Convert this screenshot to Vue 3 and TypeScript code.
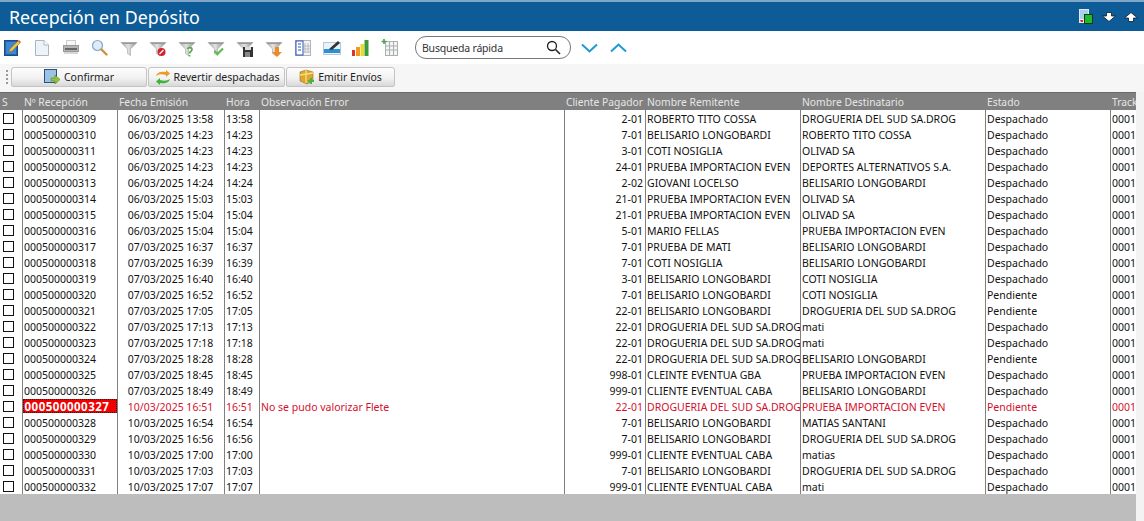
<script setup lang="ts">
type Row = { id: string; fecha: string; hora: string; obs?: string; cli: string; rem: string; dest: string; estado: string; err?: boolean }
const raw: string[] = [
  '309|06/03/2025 13:58|13:58|2-01|ROBERTO TITO COSSA|DROGUERIA DEL SUD SA.DROG|Despachado',
  '310|06/03/2025 14:23|14:23|7-01|BELISARIO LONGOBARDI|ROBERTO TITO COSSA|Despachado',
  '311|06/03/2025 14:23|14:23|3-01|COTI NOSIGLIA|OLIVAD SA|Despachado',
  '312|06/03/2025 14:23|14:23|24-01|PRUEBA IMPORTACION EVEN|DEPORTES ALTERNATIVOS S.A.|Despachado',
  '313|06/03/2025 14:24|14:24|2-02|GIOVANI LOCELSO|BELISARIO LONGOBARDI|Despachado',
  '314|06/03/2025 15:03|15:03|21-01|PRUEBA IMPORTACION EVEN|OLIVAD SA|Despachado',
  '315|06/03/2025 15:04|15:04|21-01|PRUEBA IMPORTACION EVEN|OLIVAD SA|Despachado',
  '316|06/03/2025 15:04|15:04|5-01|MARIO FELLAS|PRUEBA IMPORTACION EVEN|Despachado',
  '317|07/03/2025 16:37|16:37|7-01|PRUEBA DE MATI|BELISARIO LONGOBARDI|Despachado',
  '318|07/03/2025 16:39|16:39|7-01|COTI NOSIGLIA|BELISARIO LONGOBARDI|Despachado',
  '319|07/03/2025 16:40|16:40|3-01|BELISARIO LONGOBARDI|COTI NOSIGLIA|Despachado',
  '320|07/03/2025 16:52|16:52|7-01|BELISARIO LONGOBARDI|COTI NOSIGLIA|Pendiente',
  '321|07/03/2025 17:05|17:05|22-01|BELISARIO LONGOBARDI|DROGUERIA DEL SUD SA.DROG|Pendiente',
  '322|07/03/2025 17:13|17:13|22-01|DROGUERIA DEL SUD SA.DROG|mati|Despachado',
  '323|07/03/2025 17:18|17:18|22-01|DROGUERIA DEL SUD SA.DROG|mati|Despachado',
  '324|07/03/2025 18:28|18:28|22-01|DROGUERIA DEL SUD SA.DROG|BELISARIO LONGOBARDI|Pendiente',
  '325|07/03/2025 18:45|18:45|998-01|CLEINTE EVENTUA GBA|PRUEBA IMPORTACION EVEN|Despachado',
  '326|07/03/2025 18:49|18:49|999-01|CLIENTE EVENTUAL CABA|BELISARIO LONGOBARDI|Despachado',
  '327|10/03/2025 16:51|16:51|22-01|DROGUERIA DEL SUD SA.DROG|PRUEBA IMPORTACION EVEN|Pendiente',
  '328|10/03/2025 16:54|16:54|7-01|BELISARIO LONGOBARDI|MATIAS SANTANI|Despachado',
  '329|10/03/2025 16:56|16:56|7-01|BELISARIO LONGOBARDI|DROGUERIA DEL SUD SA.DROG|Despachado',
  '330|10/03/2025 17:00|17:00|999-01|CLIENTE EVENTUAL CABA|matias|Despachado',
  '331|10/03/2025 17:03|17:03|7-01|BELISARIO LONGOBARDI|DROGUERIA DEL SUD SA.DROG|Despachado',
  '332|10/03/2025 17:07|17:07|999-01|CLIENTE EVENTUAL CABA|mati|Despachado',
]
const rows: Row[] = raw.map((s) => {
  const [n, fecha, hora, cli, rem, dest, estado] = s.split('|')
  const err = n === '327'
  return { id: '000500000' + n, fecha, hora, cli, rem, dest, estado, err, obs: err ? 'No se pudo valorizar Flete' : '' }
})
</script>

<template>
  <div class="page">
    <svg width="0" height="0" class="defs">
      <defs>
        <linearGradient id="fg" x1="0" y1="0" x2="1" y2="0">
          <stop offset="0" stop-color="#a8a8a8" />
          <stop offset="0.450" stop-color="#e2e2e2" />
          <stop offset="1" stop-color="#8c8c8c" />
        </linearGradient>
        <symbol id="funnel" viewBox="0 0 18 18">
          <path d="M1 3.500h16l-6.500 6.500v6.500l-3-2V10z" fill="url(#fg)" stroke="#a2a2a2" stroke-width=".6" />
          <path d="M1.500 3.500h15l-1.500 1.500H3z" fill="#999" />
        </symbol>
      </defs>
    </svg>

    <header class="title">
      <span class="title-text">Recepción en Depósito</span>
      <div class="win">
        <svg width="15" height="16" viewBox="0 0 15 16">
          <rect x="0.500" y="0.500" width="9" height="10" fill="#a9d0ee" stroke="#dfeaf3" />
          <rect x="0" y="10" width="5" height="4" fill="#e8e8e8" />
          <path d="M1 11h3v2H2z" fill="#d62a2a" />
          <rect x="5.500" y="5.500" width="8" height="9" fill="#22b82b" stroke="#0d3d12" />
        </svg>
        <svg width="14" height="10" viewBox="0 0 14 10"><path d="M4.500.5h5v3.500h4L7 9.500.5 4h4z" fill="#fff" stroke="#0a1a28" stroke-width=".8" /></svg>
        <svg width="14" height="10" viewBox="0 0 14 10"><path d="M4.500 9.500h5V6h4L7 .5.500 6h4z" fill="#fff" stroke="#0a1a28" stroke-width=".8" /></svg>
      </div>
    </header>

    <div class="tools">
      <div class="ic">
        <svg width="17" height="17" viewBox="0 0 17 17"><rect x="0.500" y="1.500" width="13" height="15" fill="#2463ad" stroke="#1c4a88" /><rect x="2" y="3" width="10" height="12" fill="#3d86d2" /><path d="M5 13l1-3 8-8 2 2-8 8z" fill="#f0c63f" stroke="#a9761a" stroke-width=".6" /><path d="M14 2l1-1 2 2-1 1z" fill="#d9534f" /></svg>
      </div>
      <div class="ic">
        <svg width="14" height="16" viewBox="0 0 14 16"><path d="M.5.500h8.500l4.500 4.500v10.500H.5z" fill="#eef3f9" stroke="#a9b6c6" /><path d="M9 .5v4.500h4.500" fill="#fff" stroke="#a9b6c6" /></svg>
      </div>
      <div class="ic">
        <svg width="16" height="15" viewBox="0 0 16 15"><rect x="3.500" y="0.500" width="9" height="6" fill="#f7f7f7" stroke="#ccc" /><rect x="0.500" y="5.500" width="15" height="6" fill="#b5b5b5" stroke="#999" /><rect x="2" y="8" width="12" height="2" fill="#666" /><rect x="1" y="12" width="14" height="2" fill="#d8d8d8" /></svg>
      </div>
      <div class="ic">
        <svg width="17" height="17" viewBox="0 0 17 17"><circle cx="6.500" cy="6.500" r="5" fill="#dcecfb" stroke="#8aa6c4" stroke-width="1.200" /><path d="M10.500 10.500l5 5" stroke="#c9943a" stroke-width="2.400" stroke-linecap="round" /></svg>
      </div>
      <div class="ic"><svg width="18" height="18"><use href="#funnel" /></svg></div>
      <div class="ic">
        <svg width="18" height="18" viewBox="0 0 18 18"><use href="#funnel" width="18" height="18" /><circle cx="12.500" cy="13" r="4" fill="#d4202a" /><path d="M10.500 15l4-4" stroke="#fff" stroke-width="1.300" /></svg>
      </div>
      <div class="ic">
        <svg width="18" height="18" viewBox="0 0 18 18"><use href="#funnel" width="18" height="18" /><path d="M9.500 10c.5-2 4.500-2 4.500 .5 0 2-2.500 2-2.500 4M11.500 16v1.500" fill="none" stroke="#55ab48" stroke-width="1.700" /></svg>
      </div>
      <div class="ic">
        <svg width="18" height="18" viewBox="0 0 18 18"><use href="#funnel" width="18" height="18" /><path d="M7.500 12l3 3 5.500-5.500" fill="none" stroke="#5dbb50" stroke-width="2.200" /></svg>
      </div>
      <div class="ic">
        <svg width="18" height="18" viewBox="0 0 18 18"><use href="#funnel" width="18" height="18" /><rect x="7" y="8" width="10" height="10" fill="#333" /><rect x="9" y="8" width="6" height="3" fill="#ddd" /><rect x="9" y="13" width="5" height="5" fill="#888" /></svg>
      </div>
      <div class="ic">
        <svg width="18" height="18" viewBox="0 0 18 18"><use href="#funnel" width="18" height="18" /><path d="M10 8h4v5h3l-5 5-5-5h3z" fill="#ee8a22" /></svg>
      </div>
      <div class="ic">
        <svg width="16" height="16" viewBox="0 0 16 16"><rect x="0.500" y="0.500" width="15" height="15" fill="#f2f2f2" stroke="#a8b6cc" /><rect x="1" y="1" width="7" height="14" fill="#fff" stroke="#2d55b5" /><path d="M3 4h3M3 7h3M3 10h3" stroke="#2d55b5" /><path d="M10 3v10M13 3v10M9 6h6M9 9h6M9 12h6" stroke="#bbb" /></svg>
      </div>
      <div class="ic">
        <svg width="18" height="16" viewBox="0 0 18 16"><rect x="0.500" y="2.500" width="17" height="12" fill="#e9f3fa" stroke="#b5c6d6" /><rect x="1" y="9" width="16" height="4" fill="#2b8fd8" /><path d="M6 9l9-8 2 2-8 7z" fill="#333" /></svg>
      </div>
      <div class="ic">
        <svg width="17" height="17" viewBox="0 0 17 17"><rect x="0" y="11" width="3" height="6" fill="#d9352b" /><rect x="4" y="8" width="4" height="9" fill="#ef9a1e" /><rect x="8.500" y="5" width="3.500" height="12" fill="#e8d93a" /><rect x="12.500" y="1" width="4" height="16" fill="#3d9a36" /></svg>
      </div>
      <div class="ic">
        <svg width="17" height="17" viewBox="0 0 17 17"><rect x="4.500" y="2.500" width="12" height="14" fill="#f4f4f4" stroke="#a8b0b0" /><path d="M4 7h13M4 11h13M8.500 2v14M12.500 2v14" stroke="#a8b0b0" /><path d="M3 0v5M.5 2.500h5" stroke="#4aa253" stroke-width="1.600" /></svg>
      </div>
      <div class="search">
        <span class="search-text">Busqueda rápida</span>
        <svg width="15" height="15" viewBox="0 0 15 15"><circle cx="6" cy="6" r="4.500" fill="none" stroke="#222" stroke-width="1.300" /><path d="M9.500 9.500l4.500 4.500" stroke="#222" stroke-width="1.600" /></svg>
      </div>
      <svg class="chev first" width="17" height="10" viewBox="0 0 17 10"><path d="M1 1.500l7.500 7 7.500-7" fill="none" stroke="#1c9ad6" stroke-width="2" /></svg>
      <svg class="chev" width="17" height="10" viewBox="0 0 17 10"><path d="M1 8.500l7.500-7 7.500 7" fill="none" stroke="#1c9ad6" stroke-width="2" /></svg>
    </div>

    <div class="actions">
      <div class="grip"></div>
      <button class="btn b1">
        <svg width="17" height="16" viewBox="0 0 17 16"><rect x="0.500" y="0.500" width="12" height="13" fill="#9cc3e6" stroke="#2a4f80" /><path d="M7 9h4V6l5 4.500-5 4.500v-3H7z" fill="#8fc43c" stroke="#5c8a1e" stroke-width=".6" /></svg>
        <span>Confirmar</span>
      </button>
      <button class="btn b2">
        <svg width="16" height="15" viewBox="0 0 16 15"><path d="M1 6C2 2 7 1 11 2V0l4 3.500L11 7V5C7 4 4 4 1 6z" fill="#ee9a22" /><path d="M15 9c-1 4-6 5-10 4v2L1 11.500 5 8v2c4 1 7 1 10-1z" fill="#3eb53a" /></svg>
        <span>Revertir despachadas</span>
      </button>
      <button class="btn b3">
        <svg width="16" height="16" viewBox="0 0 16 16"><path d="M1 3l6-2 7 2v9l-6 3-7-3z" fill="#dca72f" stroke="#9a6e14" stroke-width=".6" /><path d="M7 1v13M1 6l13-2" stroke="#f6dc86" stroke-width="1.300" /><path d="M11 9h2v2h2v2h-2v2h-2v-2H9v-2h2z" fill="#49b548" /></svg>
        <span>Emitir Envíos</span>
      </button>
    </div>

    <div class="grid-wrap">
      <div class="grid">
        <div class="hrow">
          <div class="h">S</div>
          <div class="h">Nº Recepción</div>
          <div class="h">Fecha Emisión</div>
          <div class="h">Hora</div>
          <div class="h">Observación Error</div>
          <div class="h">Cliente Pagador</div>
          <div class="h">Nombre Remitente</div>
          <div class="h">Nombre Destinatario</div>
          <div class="h">Estado</div>
          <div class="h">Track</div>
        </div>
        <div v-for="r in rows" :key="r.id" class="row" :class="{ err: r.err }">
          <div class="c chk"><span class="box"></span></div>
          <div class="c"><span class="idv">{{ r.id }}</span></div>
          <div class="c mid">{{ r.fecha }}</div>
          <div class="c">{{ r.hora }}</div>
          <div class="c">{{ r.obs }}</div>
          <div class="c right">{{ r.cli }}</div>
          <div class="c">{{ r.rem }}</div>
          <div class="c">{{ r.dest }}</div>
          <div class="c">{{ r.estado }}</div>
          <div class="c">0001</div>
        </div>
      </div>
      <div class="strip"></div>
    </div>
    <div class="foot">
      <div class="foot-fill"></div>
      <div class="strip"></div>
    </div>
  </div>
</template>

<style scoped>
.page {
  width: 1144px;
  height: 521px;
  overflow: hidden;
  display: flex;
  flex-direction: column;
  background: #fff;
  font-family: Tahoma, "Noto Sans", sans-serif;
  font-size: 10.5px;
  color: #111;
}
.defs { display: block; height: 0; }
.title {
  height: 31px;
  flex: none;
  box-sizing: border-box;
  border-top: 2px solid #7fa6c9;
  background: #0d5c97;
  display: flex;
  align-items: center;
  justify-content: space-between;
  padding: 0 6px 0 9px;
}
.title-text { color: #fff; font-size: 17.800px; }
.win { display: flex; align-items: center; gap: 8px; }
.tools {
  height: 33px;
  flex: none;
  display: flex;
  align-items: center;
}
.ic { width: 29px; flex: none; display: flex; justify-content: center; }
.ic:first-child { margin-left: -2px; }
.search {
  width: 156px;
  height: 23px;
  box-sizing: border-box;
  margin-left: 11px;
  border: 1px solid #777;
  border-radius: 11px;
  display: flex;
  align-items: center;
  justify-content: space-between;
  padding: 0 9px 0 6px;
  font-size: 10.500px;
  letter-spacing: -0.200px;
  color: #333;
}
.chev { margin-left: 12px; }
.chev.first { margin-left: 10px; }
.actions {
  height: 28px;
  flex: none;
  background: #f6f6f6;
  display: flex;
  align-items: flex-start;
  padding-top: 3px;
  box-sizing: border-box;
}
.grip {
  width: 2px;
  height: 15px;
  margin: 3px 3px 0 6px;
  background: repeating-linear-gradient(to bottom, #999 0 2px, transparent 2px 4px);
}
.btn {
  height: 20px;
  box-sizing: border-box;
  border: 1px solid #c4c4c4;
  border-radius: 3px 3px 2px 2px;
  background: linear-gradient(#fdfdfd, #f2f2f2 55%, #d8d8d8);
  margin: 0 1px 0 0;
  padding: 0;
  display: flex;
  align-items: center;
  justify-content: center;
  gap: 3px;
  font-family: inherit;
  font-size: 10.500px;
  color: #222;
}
.b1 { width: 136px; }
.b2 { width: 137px; padding-left: 1px; }
.b3 { width: 109px; }
.grid-wrap { display: flex; flex: none; height: 402px; }
.grid { width: 1136px; flex: none; overflow: hidden; }
.strip { width: 8px; flex: none; background: #f3f3f3; }
.hrow, .row {
  display: grid;
  grid-template-columns: 22px 95px 107px 35px 305px 81px 155px 185px 125px 26px;
}
.hrow {
  height: 18px;
  box-sizing: border-box;
  background: #808080;
  border-top: 1px solid #6a6a6a;
  color: #e6e6e6;
  font-size: 10.300px;
  line-height: 19px;
}
.h { padding-left: 2px; white-space: nowrap; overflow: hidden; height: 17px; }
.hrow .h:nth-child(6) { text-align: right; padding-right: 2px; padding-left: 0; }
.row { height: 16px; line-height: 18px; }
.c {
  box-sizing: border-box;
  height: 16px;
  border-left: 1px solid #808080;
  padding: 0 2px 0 1px;
  white-space: nowrap;
  overflow: hidden;
}
.c.chk { border-left: none; padding: 3px 0 0 3px; }
.box {
  display: block;
  width: 11px;
  height: 11px;
  box-sizing: border-box;
  border: 1px solid #111;
}
.mid { text-align: center; }
.right { text-align: right; }
.idv { display: block; }
.row.err .c { color: #d3102c; }
.row.err .c:nth-child(2) { padding: 1px 0 1px 0; }
.row.err .idv {
  height: 14px;
  color: #fff;
  font-weight: 700;
  font-size: 11.500px;
  letter-spacing: 0.500px;
  line-height: 15px;
  padding-left: 1.500px;
  background: #f00000;
  outline: 1px dotted #222;
  outline-offset: -1px;
}
.foot { flex: 1; display: flex; }
.foot-fill { flex: 1; background: #bdbdbd; }
</style>
